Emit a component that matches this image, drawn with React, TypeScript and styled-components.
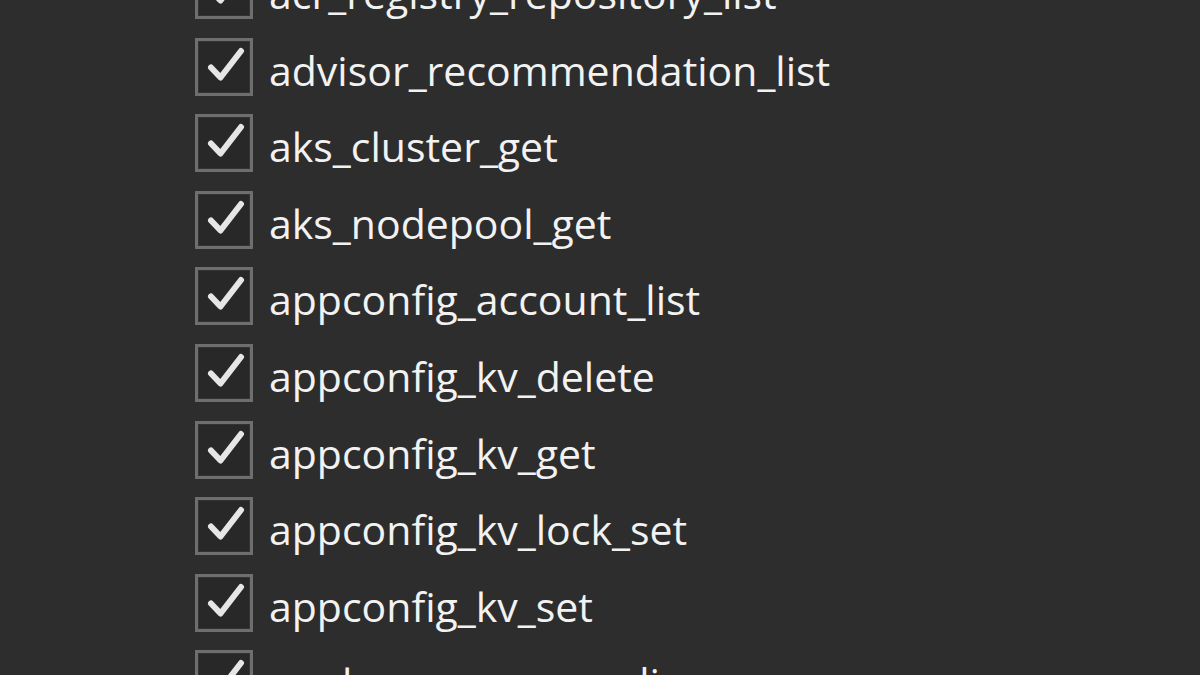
import React from 'react';
import styled, { createGlobalStyle } from 'styled-components';

const GlobalStyle = createGlobalStyle`
  html, body {
    margin: 0;
    padding: 0;
    background: #2d2d2d;
  }
  body {
    font-family: "Open Sans", "Noto Sans", sans-serif;
  }
`;

const Viewport = styled.div`
  width: 1200px;
  height: 675px;
  overflow: hidden;
  background: #2d2d2d;
`;

const ToolList = styled.ul`
  list-style: none;
  margin: -39px 0 0 0;
  padding: 0 0 0 195px;
  display: flex;
  flex-direction: column;
`;

const ToolRow = styled.li`
  display: flex;
  align-items: flex-start;
  gap: 16px;
  height: 76.6px;
`;

const CheckBox = styled.span<{ $checked: boolean }>`
  box-sizing: border-box;
  flex: 0 0 auto;
  width: 58px;
  height: 58px;
  border: 3px solid #6e6e6e;
  background: #282828;
  box-shadow: inset 0 0 0 1px #333;
  display: flex;
  align-items: center;
  justify-content: center;
  svg {
    display: ${(p) => (p.$checked ? 'block' : 'none')};
  }
`;

const Label = styled.span`
  color: #f2f2f2;
  font-size: 41px;
  line-height: 58px;
  padding-top: 3px;
  white-space: nowrap;
`;

const tools = [
  'acr_registry_repository_list',
  'advisor_recommendation_list',
  'aks_cluster_get',
  'aks_nodepool_get',
  'appconfig_account_list',
  'appconfig_kv_delete',
  'appconfig_kv_get',
  'appconfig_kv_lock_set',
  'appconfig_kv_set',
  'applens_resource_diagnose',
];

const CheckMark = () => (
  <svg width="52" height="52" viewBox="3 3 52 52">
    <path
      d="M16 29.5 L25.5 39.5 L46 13"
      fill="none"
      stroke="#e6e6e6"
      strokeWidth="6"
      strokeLinecap="round"
      strokeLinejoin="round"
    />
  </svg>
);

export default function App() {
  return (
    <Viewport>
      <GlobalStyle />
      <ToolList>
        {tools.map((name) => (
          <ToolRow key={name}>
            <CheckBox $checked>
              <CheckMark />
            </CheckBox>
            <Label>{name}</Label>
          </ToolRow>
        ))}
      </ToolList>
    </Viewport>
  );
}
